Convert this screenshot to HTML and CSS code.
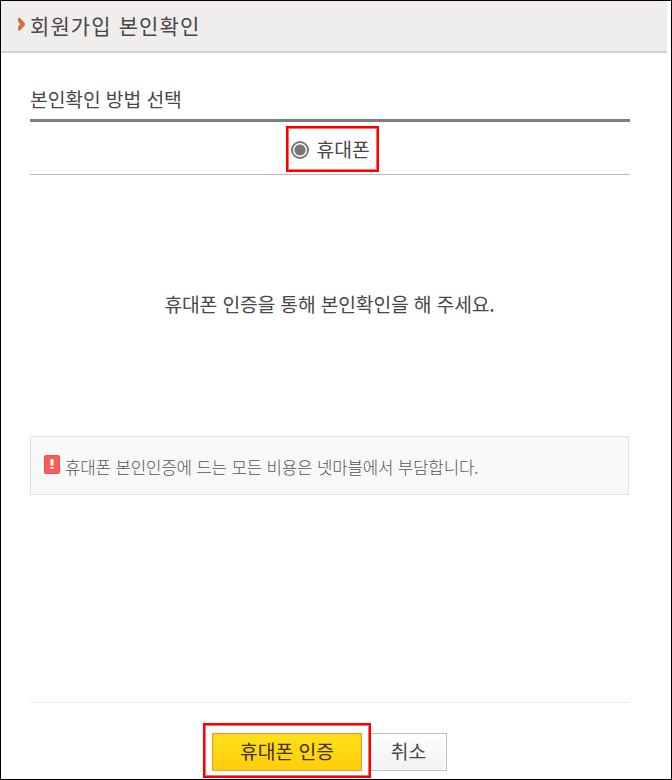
FILE: index.html
```
<!DOCTYPE html>
<html lang="ko">
<head>
    <meta charset="UTF-8">
    <meta name="viewport" content="width=device-width, initial-scale=1.0">
    <title>회원가입 본인확인</title>
    <link rel="stylesheet" href="styles.css">
</head>
<body>
    <div class="popup">
        <header class="header">
            <svg class="arrow" width="7" height="13" viewBox="0 0 7 13">
                <path d="M0 0h2L6.8 5v2.5L2 12.5H0V9l2-2.7L0 3.5z" fill="#c87941"/>
            </svg>
            <h1>회원가입 본인확인</h1>
        </header>

        <main class="content">
            <h2>본인확인 방법 선택</h2>

            <div class="method">
                <label class="method-option highlight">
                    <input type="radio" name="method" class="radio" checked>
                    <span>휴대폰</span>
                </label>
            </div>

            <p class="message">휴대폰 인증을 통해 본인확인을 해 주세요.</p>

            <div class="notice">
                <svg class="notice-icon" width="16" height="19" viewBox="0 0 16 19">
                    <rect x="0.5" y="0.5" width="15" height="18" rx="1" fill="#fc5b5b" stroke="#e25555"/>
                    <path d="M6.5 4h3v6.5h-3zM6.5 12h3v2h-3z" fill="#fff"/>
                </svg>
                <span>휴대폰 본인인증에 드는 모든 비용은 넷마블에서 부담합니다.</span>
            </div>

            <div class="buttons">
                <div class="confirm-box highlight">
                    <button type="button" class="button confirm">휴대폰 인증</button>
                </div>
                <button type="button" class="button cancel">취소</button>
            </div>
        </main>
    </div>
</body>
</html>
```

FILE: styles.css
```
* {
    box-sizing: border-box;
}

body {
    margin: 0;
    font-family: "Noto Sans CJK KR", sans-serif;
    color: #4a464a;
    background-color: #fff;
}

.popup {
    height: 780px;
    border: 1px solid #000;
    overflow: hidden;
}

.header {
    display: flex;
    align-items: flex-start;
    height: 52px;
    margin-right: 4px;
    padding-left: 17px;
    background: linear-gradient(#f2e9f0, #efeeec 4px);
    border-bottom: 2px solid #d4d0ce;
}

.arrow {
    margin: 17px 5px 0 0;
}

h1 {
    margin: 0;
    font-size: 21px;
    font-weight: 400;
    line-height: 48px;
    letter-spacing: 1.1px;
}

.content {
    width: 600px;
    margin-left: 29px;
    font-size: 19.3px;
}

h2 {
    height: 69px;
    margin: 0;
    padding-top: 33px;
    font-size: 19.3px;
    font-weight: 400;
    line-height: 26px;
    letter-spacing: -0.1px;
    border-bottom: 3px solid #7f7f7f;
}

.method {
    display: flex;
    justify-content: center;
    height: 53px;
    padding: 4px 0 0 4px;
    border-bottom: 1px solid #b8b8b8;
}

.highlight {
    border: 2px solid #f00;
    box-shadow: inset 0 0 0 1px #ff6b6b;
}

.method-option {
    display: flex;
    align-items: center;
    width: 93px;
    height: 46px;
    padding-left: 3px;
    line-height: 42px;
}

.radio {
    appearance: none;
    flex: none;
    width: 18px;
    height: 18px;
    margin: 1px 8px 0 0;
    border: 2px solid #767676;
    border-radius: 50%;
    background: radial-gradient(circle, #767676 5px, #fff 6px);
}

.message {
    height: 261px;
    margin: 0;
    padding-right: 1px;
    line-height: 258px;
    letter-spacing: -0.17px;
    text-align: center;
}

.notice {
    display: flex;
    align-items: flex-start;
    width: 599px;
    height: 59px;
    padding-left: 13px;
    font-size: 16.8px;
    font-weight: 300;
    line-height: 60px;
    letter-spacing: -0.16px;
    color: #555;
    background-color: #f8f8f8;
    border: 1px solid #e2e2e2;
}

.notice-icon {
    margin: 18px 5px 0 0;
}

.buttons {
    display: flex;
    margin-top: 207px;
    padding: 20px 0 0 173px;
    border-top: 1px solid #ececec;
}

.confirm-box {
    width: 168px;
    height: 55px;
    padding: 8px 7px;
}

.button {
    height: 38px;
    padding: 0 0 2px;
    font-family: inherit;
    font-size: 19.3px;
    line-height: 34px;
    cursor: pointer;
}

.confirm {
    display: block;
    width: 150px;
    color: #3d2f10;
    background: linear-gradient(#ffe01a, #ffce0a);
    border: 1px solid #eda32a;
    box-shadow: inset 0 0 0 1px #ffc61c;
}

.cancel {
    width: 76px;
    margin-top: 10px;
    color: #4a464a;
    background: linear-gradient(#fff, #f1f1f1);
    border: 1px solid #bfbfbf;
    border-left: 0;
    box-shadow: inset -1px -1px 0 #fff;
}
```
